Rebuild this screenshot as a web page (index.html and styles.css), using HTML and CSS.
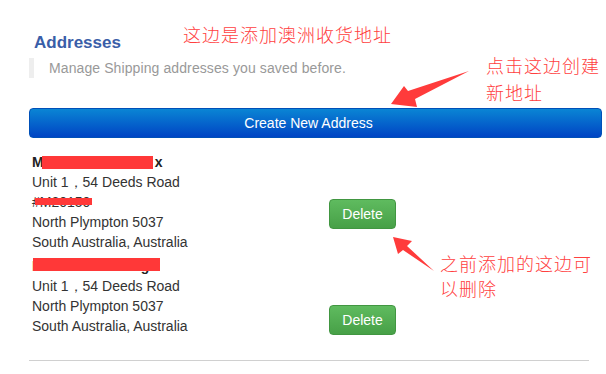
FILE: index.html
```html
<!DOCTYPE html>
<html>
<head>
<meta charset="utf-8">
<link rel="stylesheet" href="styles.css">
</head>
<body>
<div class="page">
  <h2 class="title">Addresses</h2>
  <div class="subtitle">Manage Shipping addresses you saved before.</div>
  <button class="create">Create New Address</button>

  <div class="addr first">
    <div class="lines">
      <div class="name">M<span class="gap g1"></span>x<span class="redact r1"></span></div>
      <div>Unit 1，54 Deeds Road</div>
      <div class="ref">#M20150<span class="redact r2"></span></div>
      <div>North Plympton 5037</div>
      <div>South Australia, Australia</div>
    </div>
    <button class="del">Delete</button>
  </div>

  <div class="addr second">
    <div class="lines">
      <div class="name">M<span class="gap g2"></span>g<span class="redact r3"></span></div>
      <div>Unit 1，54 Deeds Road</div>
      <div>North Plympton 5037</div>
      <div>South Australia, Australia</div>
    </div>
    <button class="del">Delete</button>
  </div>

  <hr class="rule">
</div>

<div class="note n1">这边是添加澳洲收货地址</div>
<div class="note n2">点击这边创建<br>新地址</div>
<div class="note n3">之前添加的这边可<br>以删除</div>

<svg class="arrows" width="606" height="374" viewBox="0 0 606 374">
  <polygon fill="#ff3b3b" points="391,104 404,86 408,91 469,71 415,99 417,107"/>
  <polygon fill="#ff3b3b" points="393,237 412,241 407,246 434,271 403,250 398,254"/>
</svg>
</body>
</html>
```
FILE: styles.css
```css
html, body {
  margin: 0;
  padding: 0;
  background: #fff;
}
body {
  font-family: "Liberation Sans", Arial, sans-serif;
  color: #333;
  width: 606px;
  height: 374px;
  overflow: hidden;
  position: relative;
}
.page {
  padding: 33px 4px 0 29px;
  display: flex;
  flex-direction: column;
}
.title {
  margin: 0 0 0 5px;
  font-size: 17px;
  line-height: 20px;
  font-weight: bold;
  color: #3a5ea8;
}
.subtitle {
  margin-top: 5px;
  border-left: 5px solid #eeeeee;
  padding-left: 15px;
  height: 20px;
  line-height: 20px;
  font-size: 14px;
  letter-spacing: 0.1px;
  color: #999;
}
.create {
  margin-top: 30px;
  height: 30px;
  width: 573px;
  border: 1px solid #0050b8;
  border-radius: 4px;
  background: linear-gradient(#0a85d4, #0044c4);
  color: #fff;
  font-family: "Liberation Sans", Arial, sans-serif;
  font-size: 14px;
  padding: 0 14px 0 0;
}
.addr {
  display: flex;
  align-items: flex-start;
  margin-top: 14px;
  padding-left: 3px;
}
.addr.second {
  margin-top: 4px;
}
.lines {
  width: 297px;
  font-size: 14px;
  line-height: 20px;
}
.name {
  font-weight: bold;
  color: #222;
  position: relative;
}
.ref {
  position: relative;
}
.gap {
  display: inline-block;
}
.g1 { width: 111px; }
.g2 { width: 97px; }
.redact {
  position: absolute;
  background: #ff3838;
}
.r1 { left: 10px; top: 4px; width: 111px; height: 13px; }
.r2 { left: 3px; top: 6px; width: 57px; height: 7px; }
.r3 { left: 1px; top: 2px; width: 127px; height: 13px; }
.del {
  width: 67px;
  height: 30px;
  border: 1px solid #419641;
  border-radius: 4px;
  background: linear-gradient(#5fbb5f, #47a047);
  color: #fff;
  font-family: "Liberation Sans", Arial, sans-serif;
  font-size: 14px;
  padding: 0;
}
.first .del { margin-top: 47px; }
.second .del { margin-top: 49px; }
.rule {
  margin: 24px 0 0 0;
  width: 560px;
  border: 0;
  border-top: 1px solid #d0d0d0;
}
.note {
  position: absolute;
  font-family: "Noto Sans CJK SC", sans-serif;
  color: #ff4040;
  font-size: 18px;
  letter-spacing: 1px;
  line-height: 27px;
  font-weight: 300;
}
.n1 { left: 183px; top: 21px; }
.n2 { left: 486px; top: 52px; }
.n3 { left: 440px; top: 251px; line-height: 25px; }
.arrows {
  position: absolute;
  left: 0;
  top: 0;
}
```
